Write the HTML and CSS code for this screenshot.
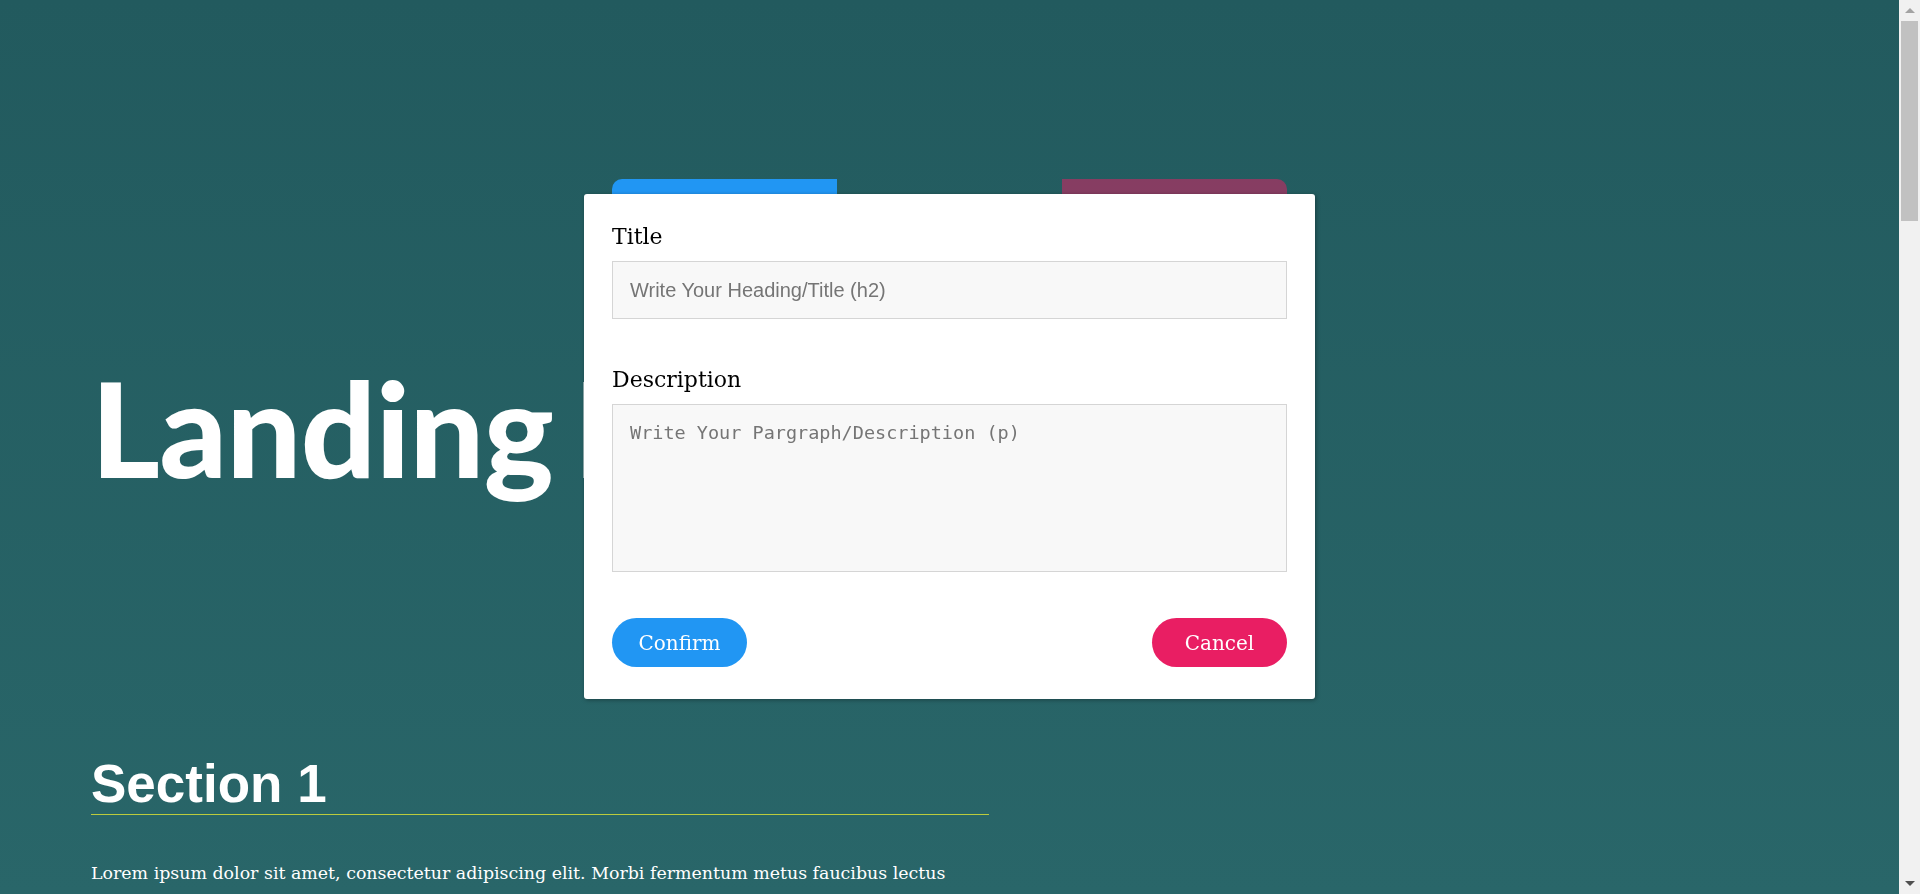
FILE: index.html
```html
<!DOCTYPE html>
<html lang="en">
<head>
<meta charset="utf-8">
<title>Landing Page</title>
<link rel="stylesheet" href="styles.css">
</head>
<body>
<div class="page">
  <div class="toolbar">
    <button class="tb tb-add" type="button" aria-label="Add section"></button>
    <button class="tb tb-remove" type="button" aria-label="Remove section"></button>
  </div>
  <header class="hero">
    <h1 class="hero-title">Landing Page</h1>
  </header>
  <main class="content">
    <section class="section">
      <h2 class="section-title">Section 1</h2>
      <p class="section-text">Lorem ipsum dolor sit amet, consectetur adipiscing elit. Morbi fermentum metus faucibus lectus pharetra dapibus. Suspendisse potenti. Aenean aliquam elementum mi, ac euismod augue. Donec eget lacinia ex. Phasellus imperdiet porta orci eget mollis. Sed convallis sollicitudin mauris ac tincidunt. Donec bibendum, nulla eget bibendum consectetur, sem nisi aliquam leo, ut pulvinar quam nunc eu augue. Pellentesque maximus imperdiet elit a pharetra. Duis lectus mi, aliquam in mi quis, aliquam porttitor lacus. Morbi a tincidunt felis. Sed leo nunc, pharetra et elementum non, faucibus vitae elit. Integer nec libero venenatis libero ultricies molestie semper in tellus. Sed congue et odio sed euismod.</p>
      <p class="section-text">Aliquam a convallis justo. Vivamus venenatis, erat eget pulvinar gravida, ipsum lacus aliquet velit, vel luctus diam ipsum a diam. Cras eu tincidunt arcu, vitae rhoncus purus. Vestibulum fermentum consectetur porttitor. Suspendisse imperdiet porttitor tortor, eget elementum tortor mollis non.</p>
    </section>
    <section class="section">
      <h2 class="section-title">Section 2</h2>
      <p class="section-text">Lorem ipsum dolor sit amet, consectetur adipiscing elit. Morbi fermentum metus faucibus lectus pharetra dapibus. Suspendisse potenti. Aenean aliquam elementum mi, ac euismod augue. Donec eget lacinia ex. Phasellus imperdiet porta orci eget mollis. Sed convallis sollicitudin mauris ac tincidunt. Donec bibendum, nulla eget bibendum consectetur, sem nisi aliquam leo, ut pulvinar quam nunc eu augue. Pellentesque maximus imperdiet elit a pharetra. Duis lectus mi, aliquam in mi quis, aliquam porttitor lacus. Morbi a tincidunt felis. Sed leo nunc, pharetra et elementum non, faucibus vitae elit. Integer nec libero venenatis libero ultricies molestie semper in tellus. Sed congue et odio sed euismod.</p>
      <p class="section-text">Aliquam a convallis justo. Vivamus venenatis, erat eget pulvinar gravida, ipsum lacus aliquet velit, vel luctus diam ipsum a diam. Cras eu tincidunt arcu, vitae rhoncus purus. Vestibulum fermentum consectetur porttitor. Suspendisse imperdiet porttitor tortor, eget elementum tortor mollis non.</p>
    </section>
    <section class="section">
      <h2 class="section-title">Section 3</h2>
      <p class="section-text">Lorem ipsum dolor sit amet, consectetur adipiscing elit. Morbi fermentum metus faucibus lectus pharetra dapibus. Suspendisse potenti. Aenean aliquam elementum mi, ac euismod augue. Donec eget lacinia ex. Phasellus imperdiet porta orci eget mollis. Sed convallis sollicitudin mauris ac tincidunt. Donec bibendum, nulla eget bibendum consectetur, sem nisi aliquam leo, ut pulvinar quam nunc eu augue. Pellentesque maximus imperdiet elit a pharetra. Duis lectus mi, aliquam in mi quis, aliquam porttitor lacus. Morbi a tincidunt felis. Sed leo nunc, pharetra et elementum non, faucibus vitae elit. Integer nec libero venenatis libero ultricies molestie semper in tellus. Sed congue et odio sed euismod.</p>
      <p class="section-text">Aliquam a convallis justo. Vivamus venenatis, erat eget pulvinar gravida, ipsum lacus aliquet velit, vel luctus diam ipsum a diam. Cras eu tincidunt arcu, vitae rhoncus purus. Vestibulum fermentum consectetur porttitor. Suspendisse imperdiet porttitor tortor, eget elementum tortor mollis non.</p>
    </section>
    <section class="section">
      <h2 class="section-title">Section 4</h2>
      <p class="section-text">Lorem ipsum dolor sit amet, consectetur adipiscing elit. Morbi fermentum metus faucibus lectus pharetra dapibus. Suspendisse potenti. Aenean aliquam elementum mi, ac euismod augue. Donec eget lacinia ex. Phasellus imperdiet porta orci eget mollis. Sed convallis sollicitudin mauris ac tincidunt. Donec bibendum, nulla eget bibendum consectetur, sem nisi aliquam leo, ut pulvinar quam nunc eu augue. Pellentesque maximus imperdiet elit a pharetra. Duis lectus mi, aliquam in mi quis, aliquam porttitor lacus. Morbi a tincidunt felis. Sed leo nunc, pharetra et elementum non, faucibus vitae elit. Integer nec libero venenatis libero ultricies molestie semper in tellus. Sed congue et odio sed euismod.</p>
      <p class="section-text">Aliquam a convallis justo. Vivamus venenatis, erat eget pulvinar gravida, ipsum lacus aliquet velit, vel luctus diam ipsum a diam. Cras eu tincidunt arcu, vitae rhoncus purus. Vestibulum fermentum consectetur porttitor. Suspendisse imperdiet porttitor tortor, eget elementum tortor mollis non.</p>
    </section>
  </main>
</div>

<div class="overlay">
  <form class="modal">
    <div class="field">
      <label class="field-label" for="title">Title</label>
      <input class="field-input" id="title" type="text" placeholder="Write Your Heading/Title (h2)">
    </div>
    <div class="field">
      <label class="field-label" for="desc">Description</label>
      <textarea class="field-area" id="desc" placeholder="Write Your Pargraph/Description (p)"></textarea>
    </div>
    <div class="actions">
      <button class="btn btn-confirm" type="button">Confirm</button>
      <button class="btn btn-cancel" type="button">Cancel</button>
    </div>
  </form>
</div>

<div class="scrollbar" aria-hidden="true">
  <span class="sb-arrow sb-up"></span>
  <span class="sb-thumb"></span>
  <span class="sb-arrow sb-down"></span>
</div>
</body>
</html>
```

FILE: styles.css
```css
html {
  background: #225a5e;
}

body {
  margin: 0 21px 0 0;
  background: linear-gradient(to bottom, #225a5e 0px, #296669 894px, #30767a 100%);
  color: #fff;
  font-family: "DejaVu Serif", "Liberation Serif", serif;
}

.page {
  padding: 179px 91px 0;
  min-height: 3665px;
}

.toolbar {
  width: 675px;
  margin: 0 auto;
  display: flex;
  justify-content: space-between;
}

.tb {
  width: 225px;
  height: 50px;
  border: 0;
  padding: 0;
}

.tb-add {
  background: #2196f3;
  border-radius: 10px 0 0 0;
}

.tb-remove {
  background: #e91e63;
  opacity: 0.5;
  border-radius: 0 10px 0 0;
}

.hero {
  margin-top: 132px;
}

.hero-title {
  margin: 0;
  font-family: Lato, "Liberation Sans", sans-serif;
  font-weight: 900;
  font-size: 132px;
  line-height: 1;
  letter-spacing: -0.5px;
  word-spacing: -11px;
  white-space: nowrap;
}

.content {
  margin-top: 261px;
}

.section {
  max-width: 898px;
  margin-bottom: 90px;
}

.section-title {
  margin: 0;
  font-family: "Liberation Sans", Arial, sans-serif;
  font-weight: 700;
  font-size: 53px;
  line-height: 60px;
  border-bottom: 1px solid #bccb3c;
}

.section-text {
  margin: 43px 0 0;
  font-family: "DejaVu Serif", "Liberation Serif", serif;
  font-size: 17.4px;
  line-height: 1.8;
}

/* Modal */
.overlay {
  position: fixed;
  top: 0;
  left: 0;
  right: 21px;
  bottom: 0;
  display: flex;
  justify-content: center;
  align-items: flex-start;
  padding-top: 194px;
  box-sizing: border-box;
}

.modal {
  box-sizing: border-box;
  width: 731px;
  padding: 27px 28px 32px;
  background: #fff;
  border-radius: 3px;
  box-shadow: 1px 1px 4px rgba(0, 0, 0, 0.35);
  color: #000;
}

.field + .field {
  margin-top: 45px;
}

.field-label {
  display: block;
  font-family: "DejaVu Serif", "Liberation Serif", serif;
  font-size: 22px;
  line-height: 31px;
  margin-bottom: 9px;
}

.field-input,
.field-area {
  display: block;
  box-sizing: border-box;
  width: 100%;
  margin: 0;
  border: 1px solid #d5d5d5;
  background: #f8f8f8;
  outline: none;
  color: #333;
}

.field-input {
  height: 58px;
  padding: 0 17px;
  font-family: "Liberation Sans", Arial, sans-serif;
  font-size: 20px;
}

.field-area {
  height: 168px;
  padding: 17px 17px;
  resize: none;
  font-family: "DejaVu Sans Mono", monospace;
  font-size: 18.5px;
  line-height: 21px;
}

.field-input::placeholder,
.field-area::placeholder {
  color: #757575;
}

.actions {
  margin-top: 46px;
  display: flex;
  justify-content: space-between;
}

.btn {
  width: 135px;
  height: 49px;
  border: 0;
  border-radius: 25px;
  color: #fff;
  font-family: "DejaVu Serif", "Liberation Serif", serif;
  font-size: 20px;
  padding: 0;
}

.btn-confirm {
  background: #2196f3;
}

.btn-cancel {
  background: #e91e63;
}

/* Page scrollbar (drawn) */
.scrollbar {
  position: fixed;
  top: 0;
  right: 0;
  width: 21px;
  height: 100%;
  background: #f1f1f1;
  display: flex;
  flex-direction: column;
  align-items: center;
}

.sb-arrow {
  width: 0;
  height: 0;
  border-left: 5px solid transparent;
  border-right: 5px solid transparent;
}

.sb-up {
  margin-top: 8px;
  border-bottom: 5px solid #a3a3a3;
}

.sb-thumb {
  margin-top: 8px;
  width: 17px;
  height: 200px;
  background: #c1c1c1;
}

.sb-down {
  margin-top: auto;
  margin-bottom: 8px;
  border-top: 5px solid #505050;
}
```
